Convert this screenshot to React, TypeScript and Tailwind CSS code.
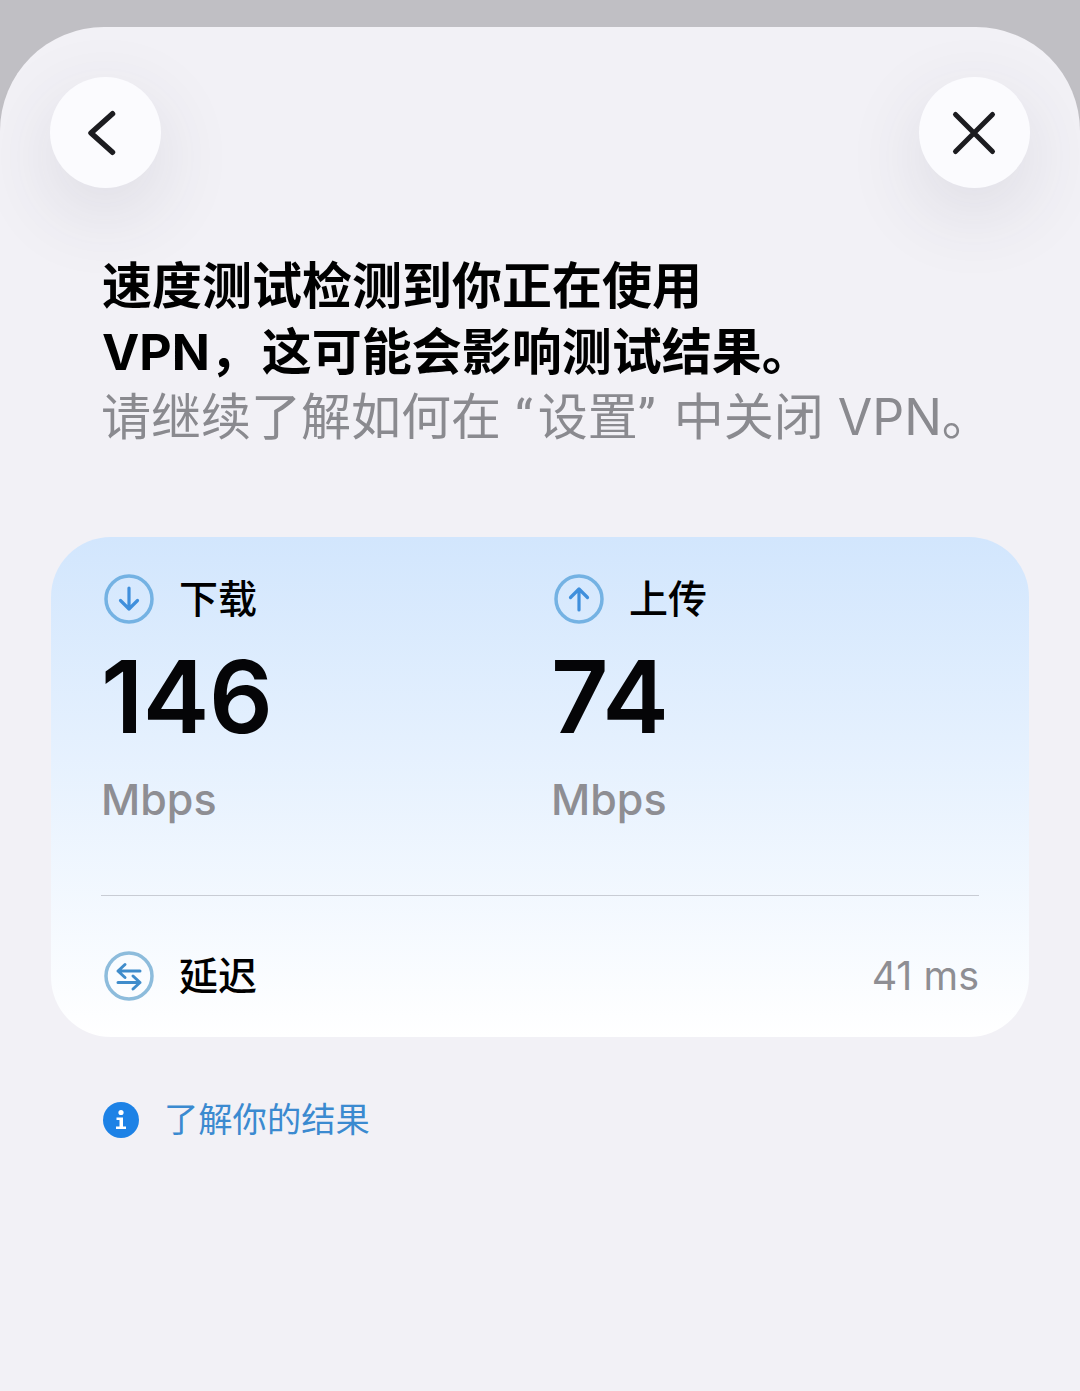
const cjk = "font-['Inter','Noto_Sans_CJK_SC',sans-serif]";

function BackIcon() {
  return (
    <svg width="44" height="52" viewBox="0 0 44 52" fill="none" stroke="#1c1c20" strokeWidth="5.500" strokeLinecap="round" strokeLinejoin="round">
      <path d="M31.500 6.750 L10 26 L31.500 45.250" />
    </svg>
  );
}

function CloseIcon() {
  return (
    <svg width="46" height="46" viewBox="0 0 46 46" fill="none" stroke="#1c1c20" strokeWidth="5" strokeLinecap="round">
      <path d="M4.500 4.500 L41.500 41.500 M41.500 4.500 L4.500 41.500" />
    </svg>
  );
}

function DownIcon() {
  return (
    <svg width="50" height="50" viewBox="0 0 50 50" fill="none" strokeLinecap="round" strokeLinejoin="round">
      <circle cx="25" cy="25" r="23" stroke="#74b2e3" strokeWidth="3.500" />
      <path d="M25 14 V35 M16.500 26.500 L25 35 L33.500 26.500" stroke="#3f8fdc" strokeWidth="3.200" />
    </svg>
  );
}

function UpIcon() {
  return (
    <svg width="50" height="50" viewBox="0 0 50 50" fill="none" strokeLinecap="round" strokeLinejoin="round">
      <circle cx="25" cy="25" r="23" stroke="#74b2e3" strokeWidth="3.500" />
      <path d="M25 36 V15 M16.500 23.500 L25 15 L33.500 23.500" stroke="#3f8fdc" strokeWidth="3.200" />
    </svg>
  );
}

function LatencyIcon() {
  return (
    <svg width="50" height="50" viewBox="0 0 50 50" fill="none" strokeLinecap="round" strokeLinejoin="round">
      <circle cx="25" cy="25" r="23" stroke="#8dbcdc" strokeWidth="3.500" />
      <path d="M36 20 H14 M21 13.500 L14 20 L21 26.500" stroke="#3f8ccb" strokeWidth="3" />
      <path d="M14 31.500 H36 M29 25 L36 31.500 L29 38" stroke="#3f8ccb" strokeWidth="3" />
    </svg>
  );
}

function InfoIcon() {
  return (
    <svg width="36" height="36" viewBox="0 0 36 36">
      <circle cx="18" cy="18" r="18" fill="#1d82e6" />
      <circle cx="18" cy="10.500" r="2.600" fill="#fff" />
      <path d="M13.500 15.500 H20 V24.500 H23 V27 H13 V24.500 H16.500 V18 H13.500 Z" fill="#fff" />
    </svg>
  );
}

function Metric({ icon, label, value }: { icon: React.ReactNode; label: string; value: string }) {
  return (
    <div className="flex flex-col">
      <div className="flex items-center h-[50px] pl-[3px]">
        {icon}
        <span className="ml-[25px] text-[39px] leading-[50px] font-medium text-black">{label}</span>
      </div>
      <div className="mt-[23px] h-[100px] text-[100px] leading-[100px] font-semibold tracking-[-0.500px] text-[#050507]">{value}</div>
      <div className="mt-[25px] text-[43px] leading-[54px] font-medium text-[#8e8e93]">Mbps</div>
    </div>
  );
}

export default function App() {
  return (
    <div className={`h-[1391px] overflow-hidden bg-[#c0bfc4] pt-[27px] ${cjk}`}>
      <div className="h-[1364px] rounded-t-[104px] bg-[#f2f1f6] px-[50px] pt-[50px]">
        <div className="flex justify-between">
          <button className="flex h-[111px] w-[111px] items-center justify-center rounded-full bg-[#fbfbfe] pr-[6px] shadow-[0_24px_80px_rgba(60,60,80,0.12)]">
            <BackIcon />
          </button>
          <button className="flex h-[111px] w-[111px] items-center justify-center rounded-full bg-[#fbfbfe] pr-[2px] shadow-[0_24px_80px_rgba(60,60,80,0.12)]">
            <CloseIcon />
          </button>
        </div>

        <div className="mt-[66px] pl-[52px] text-[50px] leading-[65.500px]">
          <p className="font-bold text-black">
            速度测试检测到你正在使用
            <br />
            VPN<span className="mr-[2px]">，</span>这可能会影响测试结果。
          </p>
          <p className="-ml-[1px] text-[#8a8a8f]">
            请继续了解如何在 <span className="mr-[5px] font-['Roboto']">“</span>设置<span className="mr-[4px] font-['Roboto']">”</span> 中关闭 VPN。
          </p>
        </div>

        <div className="mx-px mt-[85px] h-[500px] rounded-[60px] bg-gradient-to-b from-[#d2e6fd] to-white px-[50px] pt-[37px]">
          <div className="grid grid-cols-[450px_1fr] h-[321px]">
            <Metric icon={<DownIcon />} label="下载" value="146" />
            <Metric icon={<UpIcon />} label="上传" value="74" />
          </div>
          <div className="h-px bg-[#c8ccd4]" />
          <div className="mt-[55px] flex items-center justify-between pl-[3px]">
            <div className="flex items-center">
              <LatencyIcon />
              <span className="ml-[25px] text-[39px] leading-[50px] font-medium text-black">延迟</span>
            </div>
            <span className="text-[39.500px] leading-[50px] text-[#8e8e93]">41 ms</span>
          </div>
        </div>

        <div className="mt-[65px] flex items-center pl-[53px]">
          <InfoIcon />
          <span className="ml-[25px] text-[34.300px] leading-[36px] text-[#3b8ad0]">了解你的结果</span>
        </div>
      </div>
    </div>
  );
}
